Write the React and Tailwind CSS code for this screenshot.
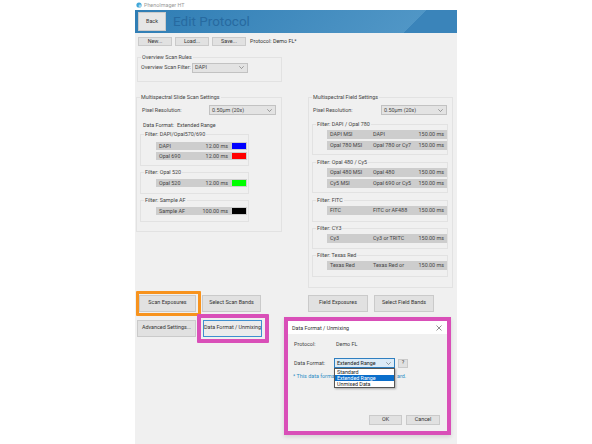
const font = { fontFamily: 'Roboto, "Noto Sans", sans-serif' };

const slideFilters = [
  { name: "Filter: DAPI/Opal570/690", mt: "mt-[1.5px]", pt: "pt-[4.5px]", pb: "pb-[5px]", rows: [["DAPI", "12.00 ms", "bg-[#0000ff]"], ["Opal 690", "12.00 ms", "bg-[#ff0000]"]] },
  { name: "Filter: Opal 520", mt: "mt-[2.5px]", pt: "pt-[3.5px]", pb: "pb-[6px]", rows: [["Opal 520", "12.00 ms", "bg-[#00ff00]"]] },
  { name: "Filter: Sample AF", mt: "mt-[3px]", pt: "pt-[3px]", pb: "pb-[5.5px]", rows: [["Sample AF", "100.00 ms", "bg-black"]] },
];

const fieldFilters = [
  { name: "Filter: DAPI / Opal 780", mt: "mt-[5.5px]", pb: "pb-[4px]", rows: [["DAPI MSI", "DAPI"], ["Opal 780 MSI", "Opal 780 or Cy7"]] },
  { name: "Filter: Opal 480 / Cy5", mt: "mt-[3.5px]", pb: "pb-[4px]", rows: [["Opal 480 MSI", "Opal 480"], ["Cy5 MSI", "Opal 690 or Cy5"]] },
  { name: "Filter: FITC", mt: "mt-[3.5px]", pb: "pb-[6px]", rows: [["FITC", "FITC or AF488"]] },
  { name: "Filter: CY3", mt: "mt-[2.5px]", pb: "pb-[5px]", rows: [["Cy3", "Cy3 or TRITC"]] },
  { name: "Filter: Texas Red", mt: "mt-[2.5px]", pb: "pb-[6px]", rows: [["Texas Red", "Texas Red or"]] },
];

function Btn({ className = "", children }) {
  return (
    <button className={`flex items-center justify-center whitespace-nowrap bg-[#e1e1e1] border border-[#cacaca] text-[5.4px] leading-none text-[#333] ${className}`}>
      {children}
    </button>
  );
}

function Chevron() {
  return (
    <svg width="5" height="3" viewBox="0 0 5 3" fill="none" stroke="#666" strokeWidth="0.6">
      <path d="M0.3 0.3 2.5 2.5 4.7 0.3" />
    </svg>
  );
}

function Select({ value, className = "" }) {
  return (
    <div className={`flex items-center justify-between h-[10px] bg-[#e3e3e3] border border-[#c2c2c2] pl-[1px] pr-[3px] text-[5.4px] text-[#444] ${className}`}>
      <span className="pl-[1px]">{value}</span>
      <Chevron />
    </div>
  );
}

function Group({ title, className = "", children }) {
  return (
    <fieldset className={`border border-[#e2e2e2] ${className}`}>
      <legend className="ml-[3px] px-[1px] text-[5.4px] leading-[7px] whitespace-nowrap text-[#444]">{title}</legend>
      {children}
    </fieldset>
  );
}

function Dialog() {
  return (
    <div className="absolute left-[284px] top-[317px] w-[167px] h-[118px] border-[4px] border-[#d94fb8] bg-[#f0f0f0] text-[5.4px] leading-[8px] text-[#444] shadow-[0_2px_4px_rgba(0,0,0,0.12)]">
      <div className="flex items-center justify-between h-[13px] bg-white pl-[4px] pr-[5px] text-[#333]">
        <span>Data Format / Unmixing</span>
        <svg width="6" height="6" viewBox="0 0 6 6" stroke="#444" strokeWidth="0.6"><path d="M0.5 0.5 5.5 5.5M5.5 0.5 0.5 5.5" /></svg>
      </div>
      <div className="flex mt-[6px] pl-[6px]">
        <span className="w-[42px]">Protocol:</span>
        <span>Demo FL</span>
      </div>
      <div className="flex items-center mt-[10px] pl-[6px]">
        <span className="w-[40px]">Data Format:</span>
        <div className="flex items-center justify-between w-[61px] h-[10px] bg-[#dcebf7] border border-[#2f7fc0] pl-[2px] pr-[3px] text-[#222]">
          <span>Extended Range</span>
          <Chevron />
        </div>
        <Btn className="w-[10px] h-[9px] ml-[3px]">?</Btn>
      </div>
      {/* the open list hides the middle of this note */}
      <p className="flex mt-[4px] pl-[5px] whitespace-nowrap text-[#2b8cc4]">
        <span className="w-[104px]">* This data format's</span>
        <span>ard.</span>
      </p>
      <div className="absolute left-[46px] top-[47px] w-[61px] bg-white border border-[#555] text-[#222] leading-[6px] shadow-[1px_1px_2px_rgba(0,0,0,0.3)]">
        <div className="pl-[2px]">Standard</div>
        <div className="pl-[2px] bg-[#0a6ecb] text-white">Extended Range</div>
        <div className="pl-[2px]">Unmixed Data</div>
      </div>
      <div className="absolute right-[7px] bottom-[6px] flex gap-[4px]">
        <Btn className="w-[33px] h-[10px] border-[#2f7fc0]">OK</Btn>
        <Btn className="w-[34px] h-[10px]">Cancel</Btn>
      </div>
    </div>
  );
}

export default function App() {
  return (
    <div className="relative w-[592px] h-[444px] bg-white overflow-hidden" style={font}>
      <div className="ml-[135px] w-[322px] h-[444px] flex flex-col bg-[#f0f0f0]">
        <div className="h-[10px] bg-white flex items-center gap-[2px] pl-[1px] text-[5.4px] text-[#999]">
          <svg width="6" height="6" viewBox="0 0 6 6"><circle cx="3" cy="3" r="2.6" fill="#3fa6d8" /><circle cx="4" cy="4" r="1.4" fill="#9fd4ee" /></svg>
          <span>PhenoImager HT</span>
        </div>
        <div className="h-[23px] flex items-center pl-[3px] bg-[linear-gradient(135deg,#2f7db4_0%,#5096c6_84.6%,#3a84ba_84.6%,#3a84ba_100%)]">
          <Btn className="w-[28px] h-[19px] !bg-[#e6e6e6]">Back</Btn>
          <h1 className="ml-[7px] text-[13.5px] leading-none text-[#276aa0]">Edit Protocol</h1>
        </div>

        <div className="flex items-center gap-[3px] pl-[3px] mt-[4px]">
          <Btn className="w-[34px] h-[9px]">New...</Btn>
          <Btn className="w-[34px] h-[9px]">Load...</Btn>
          <Btn className="w-[34px] h-[9px]">Save...</Btn>
          <span className="ml-[1px] text-[5.4px] text-[#333]">Protocol: Demo FL*</span>
        </div>

        <div className="flex pl-[1px] mt-[7.5px] h-[235px]">
          <div className="w-[146px]">
            <Group title="Overview Scan Rules" className="ml-[1px] w-[144.5px] h-[28.5px]">
              <div className="flex items-center pl-[3px] pt-[2px]">
                <span className="w-[51px] whitespace-nowrap text-[5.4px] text-[#444]">Overview Scan Filter:</span>
                <Select value="DAPI" className="w-[56px]" />
              </div>
            </Group>

            <Group title="Multispectral Slide Scan Settings" className="mt-[11.5px] w-[145.5px] h-[138.5px]">
              <div className="flex items-center pl-[5px] pt-[4.5px]">
                <span className="w-[67px] text-[5.4px] text-[#444]">Pixel Resolution:</span>
                <Select value="0.50µm (20x)" className="w-[67px]" />
              </div>
              <div className="flex pl-[6px] mt-[6px] text-[5.4px] leading-[8px] text-[#444]">
                <span className="w-[34px]">Data Format:</span>
                <span>Extended Range</span>
              </div>
              {slideFilters.map((f) => (
                <Group key={f.name} title={f.name} className={`ml-[3px] w-[109px] ${f.mt} ${f.pt} ${f.pb}`}>
                  <div className="flex flex-col gap-[2px]">
                    {f.rows.map(([name, ms, swatch]) => (
                      <div key={name} className="flex items-center h-[8px] ml-[15px] mr-[1px] bg-[#cdcdcd] text-[5.4px] text-[#444]">
                        <span className="flex-1 pl-[3px]">{name}</span>
                        <span>{ms}</span>
                        <span className={`w-[14px] h-[6px] ml-[4px] mr-[1px] ${swatch}`}></span>
                      </div>
                    ))}
                  </div>
                </Group>
              ))}
            </Group>
          </div>

          <div className="ml-[26px] w-[145px] pt-[40px]">
            <Group title="Multispectral Field Settings" className="h-[194.5px]">
              <div className="flex items-center pl-[4px] pt-[4.5px]">
                <span className="w-[68px] text-[5.4px] text-[#444]">Pixel Resolution:</span>
                <Select value="0.50µm (20x)" className="w-[66px]" />
              </div>
              {fieldFilters.map((f) => (
                <Group key={f.name} title={f.name} className={`ml-[3px] w-[136px] ${f.mt} pt-[2.5px] ${f.pb}`}>
                  <div className="flex flex-col gap-[2px]">
                    {f.rows.map(([name, dye]) => (
                      <div key={name} className="flex items-center h-[9px] ml-[14px] bg-[#cdcdcd] text-[5.4px] text-[#444]">
                        <span className="w-[46px] pl-[3px]">{name}</span>
                        <span className="flex-1 whitespace-nowrap">{dye}</span>
                        <span className="pr-[3px]">150.00 ms</span>
                      </div>
                    ))}
                  </div>
                </Group>
              ))}
            </Group>
          </div>
        </div>

        <div className="flex pl-[4px] mt-[6px]">
          <Btn className="w-[57px] h-[17px]">Scan Exposures</Btn>
          <Btn className="w-[59px] h-[17px] ml-[6px]">Select Scan Bands</Btn>
          <Btn className="w-[60px] h-[17px] ml-[47px]">Field Exposures</Btn>
          <Btn className="w-[60px] h-[17px] ml-[6px]">Select Field Bands</Btn>
        </div>
        <div className="flex pl-[2px] mt-[8px]">
          <Btn className="w-[59px] h-[17px]">Advanced Settings...</Btn>
          <Btn className="w-[59px] h-[17px] ml-[7px] !bg-[#ececec] !border-[#3f8fd0]">Data Format / Unmixing</Btn>
        </div>
      </div>

      {/* annotation frames drawn over the app */}
      <div className="absolute left-[136px] top-[291px] w-[65px] h-[25px] border-[3.5px] border-[#f7931e] rounded-[1px]"></div>
      <div className="absolute left-[197px] top-[314px] w-[72px] h-[29px] border-[4px] border-[#d94fb8] rounded-[1px]"></div>
      <Dialog />
    </div>
  );
}
